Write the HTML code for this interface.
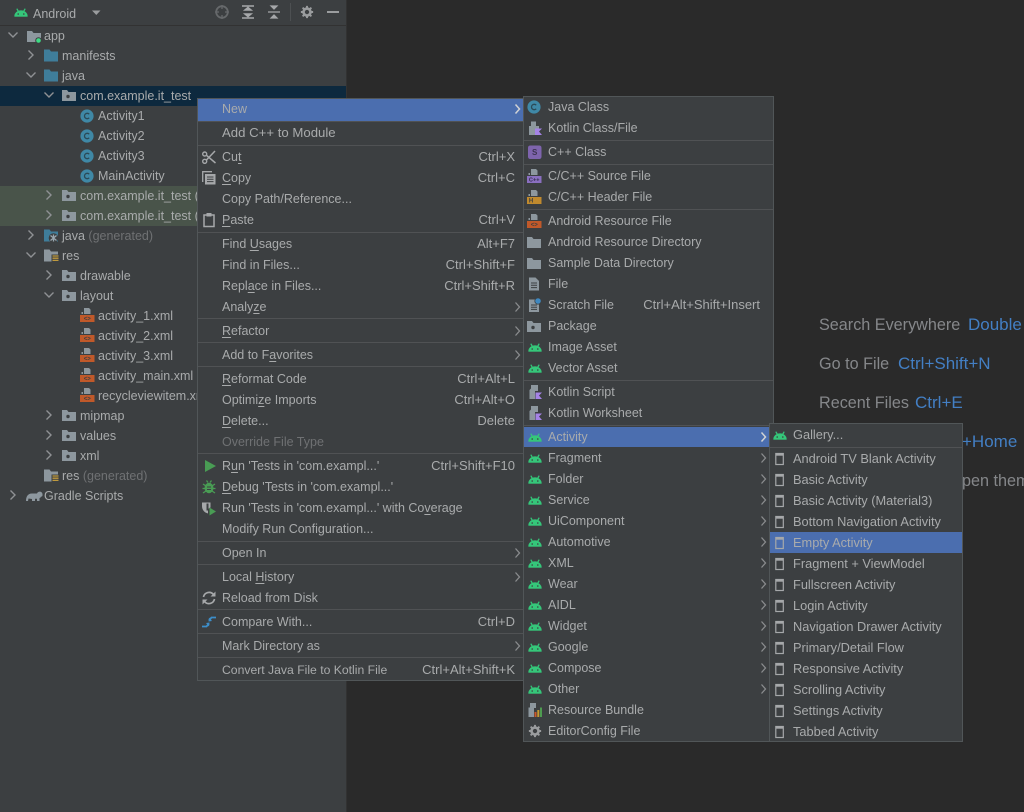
<!DOCTYPE html>
<html><head><meta charset="utf-8"><title>Android Studio</title>
<style>
html,body{margin:0;padding:0;background:#2a2a2a}
#r{position:relative;width:1024px;height:812px;overflow:hidden;background:#2a2a2a;font:12.5px "Liberation Sans",sans-serif;color:#a9abac;filter:blur(.35px)}
#r div{position:absolute}
#r i{position:absolute;font-style:normal;line-height:20px;white-space:nowrap;margin-top:1px}
#r i.m1,#r i.m2,#r i.m3,#r i.k1{margin-top:0}
u{text-underline-offset:2px;text-decoration-thickness:1px}
.m1{left:222px}.m2{left:548px}.m3{left:793px;font-size:12.8px}
.k1{right:509px;font-size:13px}
.g{color:#6f7173}
.h{color:#85878a;font-size:16.2px}
.b{color:#437fc4;font-size:17px}
.s{height:1px;background:#505254}
#r svg{position:absolute;left:0;top:0}
</style></head><body><div id="r">
<div style="left:0;top:0;width:346px;height:812px;background:#3c3f41;border-right:1px solid #323232"></div>
<div style="left:0;top:25px;width:346px;height:1px;background:#323232"></div>
<div style="left:0;top:86px;width:346px;height:20px;background:#0d293e"></div>
<div style="left:0;top:186px;width:346px;height:40px;background:#49544a"></div>
<i style="left:33px;top:3px">Android</i>
<i style="left:44px;top:25px">app</i>
<i style="left:62px;top:45px">manifests</i>
<i style="left:62px;top:65px">java</i>
<i style="left:80px;top:85px">com.example.it_test</i>
<i style="left:98px;top:105px">Activity1</i>
<i style="left:98px;top:125px">Activity2</i>
<i style="left:98px;top:145px">Activity3</i>
<i style="left:98px;top:165px">MainActivity</i>
<i style="left:80px;top:185px">com.example.it_test (test)</i>
<i style="left:80px;top:205px">com.example.it_test (test)</i>
<i style="left:62px;top:225px">java <span class="g">(generated)</span></i>
<i style="left:62px;top:245px">res</i>
<i style="left:80px;top:265px">drawable</i>
<i style="left:80px;top:285px">layout</i>
<i style="left:98px;top:305px">activity_1.xml</i>
<i style="left:98px;top:325px">activity_2.xml</i>
<i style="left:98px;top:345px">activity_3.xml</i>
<i style="left:98px;top:365px">activity_main.xml</i>
<i style="left:98px;top:385px">recycleviewitem.xml</i>
<i style="left:80px;top:405px">mipmap</i>
<i style="left:80px;top:425px">values</i>
<i style="left:80px;top:445px">xml</i>
<i style="left:62px;top:465px">res <span class="g">(generated)</span></i>
<i style="left:44px;top:485px">Gradle Scripts</i>

<i class="h" style="left:819px;top:314px">Search Everywhere</i><i class="b" style="left:968px;top:314px">Double Shift</i>
<i class="h" style="left:819px;top:353px">Go to File</i><i class="b" style="left:898px;top:353px">Ctrl+Shift+N</i>
<i class="h" style="left:819px;top:392px">Recent Files</i><i class="b" style="left:915px;top:392px">Ctrl+E</i>
<i class="b" style="left:962px;top:431px">+Home</i>
<i class="h" style="left:962px;top:470px">pen them</i>

<div style="left:197px;top:98px;width:325px;height:581px;background:#3c3f41;border:1px solid #515658"></div>
<div style="left:198px;top:99px;width:325px;height:22px;background:#4b6eaf"></div>
<div class="s" style="left:198px;top:121px;width:325px"></div>
<div class="s" style="left:198px;top:145px;width:325px"></div>
<div class="s" style="left:198px;top:232px;width:325px"></div>
<div class="s" style="left:198px;top:318px;width:325px"></div>
<div class="s" style="left:198px;top:342px;width:325px"></div>
<div class="s" style="left:198px;top:366px;width:325px"></div>
<div class="s" style="left:198px;top:453px;width:325px"></div>
<div class="s" style="left:198px;top:541px;width:325px"></div>
<div class="s" style="left:198px;top:564px;width:325px"></div>
<div class="s" style="left:198px;top:609px;width:325px"></div>
<div class="s" style="left:198px;top:633px;width:325px"></div>
<div class="s" style="left:198px;top:657px;width:325px"></div>
<i class="m1" style="top:99px">New</i>
<i class="m1" style="top:123px;font-size:13.2px">Add C++ to Module</i>
<i class="m1" style="top:147px">Cu<u>t</u></i><i class="k1" style="top:147px">Ctrl+X</i>
<i class="m1" style="top:168px"><u>C</u>opy</i><i class="k1" style="top:168px">Ctrl+C</i>
<i class="m1" style="top:189px">Copy Path/Reference...</i>
<i class="m1" style="top:210px"><u>P</u>aste</i><i class="k1" style="top:210px">Ctrl+V</i>
<i class="m1" style="top:234px">Find <u>U</u>sages</i><i class="k1" style="top:234px">Alt+F7</i>
<i class="m1" style="top:255px">Find in Files...</i><i class="k1" style="top:255px">Ctrl+Shift+F</i>
<i class="m1" style="top:276px">Repl<u>a</u>ce in Files...</i><i class="k1" style="top:276px">Ctrl+Shift+R</i>
<i class="m1" style="top:297px">Analy<u>z</u>e</i>
<i class="m1" style="top:321px"><u>R</u>efactor</i>
<i class="m1" style="top:345px">Add to F<u>a</u>vorites</i>
<i class="m1" style="top:369px"><u>R</u>eformat Code</i><i class="k1" style="top:369px">Ctrl+Alt+L</i>
<i class="m1" style="top:390px">Optimi<u>z</u>e Imports</i><i class="k1" style="top:390px">Ctrl+Alt+O</i>
<i class="m1" style="top:411px"><u>D</u>elete...</i><i class="k1" style="top:411px">Delete</i>
<i class="m1 g" style="top:432px">Override File Type</i>
<i class="m1" style="top:456px">R<u>u</u>n 'Tests in 'com.exampl...'</i><i class="k1" style="top:456px">Ctrl+Shift+F10</i>
<i class="m1" style="top:477px"><u>D</u>ebug 'Tests in 'com.exampl...'</i>
<i class="m1" style="top:498px">Run 'Tests in 'com.exampl...' with Co<u>v</u>erage</i>
<i class="m1" style="top:519px">Modify Run Configuration...</i>
<i class="m1" style="top:543px">Open In</i>
<i class="m1" style="top:567px">Local <u>H</u>istory</i>
<i class="m1" style="top:588px">Reload from Disk</i>
<i class="m1" style="top:612px">Compare With...</i><i class="k1" style="top:612px">Ctrl+D</i>
<i class="m1" style="top:636px">Mark Directory as</i>
<i class="m1" style="top:660px;font-size:12.2px">Convert Java File to Kotlin File</i><i class="k1" style="top:660px">Ctrl+Alt+Shift+K</i>

<div style="left:523px;top:96px;width:249px;height:644px;background:#3c3f41;border:1px solid #515658"></div>
<div class="s" style="left:524px;top:140px;width:249px"></div>
<div class="s" style="left:524px;top:164px;width:249px"></div>
<div class="s" style="left:524px;top:209px;width:249px"></div>
<div class="s" style="left:524px;top:380px;width:249px"></div>
<div class="s" style="left:524px;top:425px;width:249px"></div>
<div style="left:524px;top:427px;width:245px;height:20px;background:#4b6eaf"></div>
<i class="m2" style="top:97px">Java Class</i>
<i class="m2" style="top:118px">Kotlin Class/File</i>
<i class="m2" style="top:142px">C++ Class</i>
<i class="m2" style="top:166px">C/C++ Source File</i>
<i class="m2" style="top:187px">C/C++ Header File</i>
<i class="m2" style="top:211px">Android Resource File</i>
<i class="m2" style="top:232px">Android Resource Directory</i>
<i class="m2" style="top:253px">Sample Data Directory</i>
<i class="m2" style="top:274px">File</i>
<i class="m2" style="top:295px">Scratch File</i><i class="k1" style="right:264px;top:295px">Ctrl+Alt+Shift+Insert</i>
<i class="m2" style="top:316px">Package</i>
<i class="m2" style="top:337px">Image Asset</i>
<i class="m2" style="top:358px">Vector Asset</i>
<i class="m2" style="top:382px">Kotlin Script</i>
<i class="m2" style="top:403px">Kotlin Worksheet</i>
<i class="m2" style="top:427px">Activity</i>
<i class="m2" style="top:448px">Fragment</i>
<i class="m2" style="top:469px">Folder</i>
<i class="m2" style="top:490px">Service</i>
<i class="m2" style="top:511px">UiComponent</i>
<i class="m2" style="top:532px">Automotive</i>
<i class="m2" style="top:553px">XML</i>
<i class="m2" style="top:574px">Wear</i>
<i class="m2" style="top:595px">AIDL</i>
<i class="m2" style="top:616px">Widget</i>
<i class="m2" style="top:637px">Google</i>
<i class="m2" style="top:658px">Compose</i>
<i class="m2" style="top:679px">Other</i>
<i class="m2" style="top:700px">Resource Bundle</i>
<i class="m2" style="top:721px">EditorConfig File</i>

<div style="left:769px;top:423px;width:192px;height:317px;background:#3c3f41;border:1px solid #515658"></div>
<div class="s" style="left:770px;top:447px;width:192px"></div>
<div style="left:770px;top:532px;width:192px;height:21px;background:#4b6eaf"></div>
<i class="m3" style="top:425px">Gallery...</i>
<i class="m3" style="top:449px">Android TV Blank Activity</i>
<i class="m3" style="top:470px">Basic Activity</i>
<i class="m3" style="top:491px">Basic Activity (Material3)</i>
<i class="m3" style="top:512px">Bottom Navigation Activity</i>
<i class="m3" style="top:533px">Empty Activity</i>
<i class="m3" style="top:554px">Fragment + ViewModel</i>
<i class="m3" style="top:575px">Fullscreen Activity</i>
<i class="m3" style="top:596px">Login Activity</i>
<i class="m3" style="top:617px">Navigation Drawer Activity</i>
<i class="m3" style="top:638px">Primary/Detail Flow</i>
<i class="m3" style="top:659px">Responsive Activity</i>
<i class="m3" style="top:680px">Scrolling Activity</i>
<i class="m3" style="top:701px">Settings Activity</i>
<i class="m3" style="top:722px">Tabbed Activity</i>

<svg width="1024" height="812" viewBox="0 0 1024 812" font-family="Liberation Sans, sans-serif">
<defs>
<g id="droid"><path d="M1.500 12.500c0-2.600 1.400-4.300 3.200-5.200L3.500 5l.8-.4 1.300 2.300c1.500-.5 3.300-.5 4.800 0l1.300-2.300.8.400-1.200 2.300c1.800.9 3.200 2.600 3.200 5.200z" fill="#35c77a" stroke="#35c77a" stroke-width=".4"/><circle cx="5.200" cy="10" r=".8" fill="#3c3f41"/><circle cx="10.800" cy="10" r=".8" fill="#3c3f41"/></g>
<path id="cr" d="M5.500 3.500l4.500 4.500-4.500 4.500" fill="none" stroke="#8f9194" stroke-width="1.400"/>
<path id="cd" d="M3.500 5.500l4.500 4.500 4.500-4.500" fill="none" stroke="#8f9194" stroke-width="1.400"/>
<path id="ar" d="M5.500 3.500l4 4.500-4 4.500" fill="none" stroke="#8a8c8e" stroke-width="1.300"/>
<path id="arw" d="M5.500 3.500l4 4.500-4 4.500" fill="none" stroke="#d0d2d4" stroke-width="1.500"/>
<path id="fb" d="M1 2.500h5.500l1.500 2h7v10H1z" fill="#3f7d9a"/>
<path id="fg" d="M1 3h5l1.500 2H15v9H1z" fill="#8d979e"/>
<g id="pk"><path d="M1 3h5l1.500 2H15v9H1z" fill="#8d979e"/><circle cx="7" cy="9.500" r="1.700" fill="#3c3f41"/></g>
<g id="app"><path d="M1 3h5l1.500 2H15v9H1z" fill="#8d979e"/><circle cx="12.500" cy="12.500" r="2.800" fill="#3ddc84" stroke="#3c3f41"/></g>
<g id="jgen"><path d="M1 2.500h5.500l1.500 2h7v10H1z" fill="#3f7d9a"/><circle cx="10.500" cy="11" r="4.800" fill="#3c3f41"/><path d="M7.500 8.500l6 5M13.500 8.500l-6 5M10.500 7.500v7" stroke="#9aa7b0" stroke-width="1.300"/></g>
<g id="res"><path d="M1 2.500h5.500l1.500 2h7v10H1z" fill="#8d979e"/><rect x="8.500" y="7.500" width="7" height="8" fill="#3c3f41"/><path d="M9.500 9h6M9.500 11.200h6M9.500 13.400h6" stroke="#c09a3e" stroke-width="1.300"/></g>
<g id="cls"><circle cx="8" cy="8" r="6.600" fill="#3f88a6"/><path d="M10.200 6.200a2.700 2.700 0 1 0 0 3.600" fill="none" stroke="#2b4a57" stroke-width="1.300"/></g>
<g id="xml"><path d="M5 1h5l1.500 1.500V7H5zM2.500 5H4v2H2.500z" fill="#8d979e"/><rect x="1" y="8" width="14.500" height="7" fill="#c0592a"/><text x="8.200" y="13.600" font-size="6" text-anchor="middle" fill="#3c3f41" font-weight="bold">&lt;&gt;</text></g>
<g id="cpp"><path d="M5 1h5l1.500 1.500V7H5zM2.500 5H4v2H2.500z" fill="#8d979e"/><rect x="1" y="8" width="14.500" height="7" fill="#8a6fc0"/><text x="8.200" y="13.600" font-size="5.600" text-anchor="middle" fill="#33304a" font-weight="bold">C++</text></g>
<g id="hdr"><path d="M5 1h5l1.500 1.500V7H5zM2.500 5H4v2H2.500z" fill="#8d979e"/><rect x="1" y="8" width="14.500" height="7" fill="#c08a2e"/><text x="5" y="13.600" font-size="6" text-anchor="middle" fill="#3c3f41" font-weight="bold">H</text></g>
<g id="kt"><path d="M4 1.500h5V6h3v3H8v6H2V6h2z" fill="#8d979e"/><path d="M8 8.500h7l-3 3 3 3.500H8z" fill="#a583e6"/></g>
<g id="ks"><path d="M4 1h7v6H8v8H2.500V6L4 4.500z" fill="#8d979e"/><path d="M8.500 8.500h6.500l-3 3 3 3.500h-6.500z" fill="#a583e6"/></g>
<g id="scl"><rect x="1" y="1.500" width="13.500" height="13.500" rx="2.200" fill="#7e64ad"/><text x="7.700" y="11.200" font-size="8" text-anchor="middle" fill="#3c3350" font-weight="bold">S</text></g>
<g id="doc"><path d="M3 1.500h6.500l3.500 3.500v9.500H3z" fill="#8d979e"/><path d="M5 7h6M5 9.300h6M5 11.600h6" stroke="#3c3f41" stroke-width="1"/></g>
<g id="scr"><path d="M3 2.500h6.500l3.500 3.500v9H3z" fill="#8d979e"/><path d="M5 8h6M5 10.200h6M5 12.400h6" stroke="#3c3f41" stroke-width="1"/><circle cx="12" cy="4" r="3.200" fill="#3f88c0" stroke="#3c3f41" stroke-width=".8"/></g>
<g id="act"><rect x="3.800" y="2.500" width="7.500" height="11" fill="none" stroke="#a6a8aa" stroke-width="1.200"/><rect x="3.800" y="2.500" width="7.500" height="2.200" fill="#a6a8aa"/></g>
<g id="gear" transform="scale(.875)"><circle cx="8" cy="8" r="4" fill="none" stroke="#9a9c9e" stroke-width="3"/><path d="M8 1v3M8 12v3M1 8h3M12 8h3M3 3l2.200 2.200M10.800 10.800L13 13M13 3l-2.200 2.200M5.200 10.800L3 13" stroke="#9a9c9e" stroke-width="2.200"/></g>
<g id="bun"><path d="M3 1h6v5H7v9H1.500V5.500H3z" fill="#8d979e"/><rect x="7.500" y="10" width="2" height="5" fill="#c9572a"/><rect x="10.300" y="8" width="2" height="7" fill="#c49a2e"/><rect x="13" y="5.500" width="2" height="9.500" fill="#4e9b50"/></g>
<g id="cut"><circle cx="3.700" cy="12.300" r="2" fill="none" stroke="#a6a8aa" stroke-width="1.400"/><circle cx="3.700" cy="5" r="2" fill="none" stroke="#a6a8aa" stroke-width="1.400"/><path d="M5.300 6.200L14.500 14M5.300 11.100L14 2" stroke="#a6a8aa" stroke-width="1.500"/></g>
<g id="cpy"><path d="M1.700 12V1.700H11" fill="none" stroke="#a6a8aa" stroke-width="1.300"/><rect x="4" y="4" width="10.500" height="10.500" fill="#a6a8aa"/><path d="M6 7h6.500M6 9.300h6.500M6 11.600h6.500" stroke="#3c3f41"/></g>
<g id="pst"><rect x="3" y="3" width="10" height="11.500" fill="none" stroke="#a6a8aa" stroke-width="1.500"/><rect x="5.500" y="1" width="5" height="3.500" fill="#a6a8aa"/></g>
<path id="run" d="M3 2l11 6-11 6z" fill="#499c54"/>
<g id="dbg"><ellipse cx="8" cy="9" rx="4.500" ry="5.200" fill="#499c54"/><path d="M2 5l3 2M14 5l-3 2M1.500 9.500h3M14.500 9.500h-3M2 14l3-2M14 14l-3-2M5.500 1.500l1.500 2M10.500 1.500l-1.500 2" stroke="#499c54" stroke-width="1.300"/><path d="M6 8h4M6 10.500h4" stroke="#3c3f41" stroke-width="1"/></g>
<g id="cov"><path d="M1 2.500h8.500v5L7 9v4.500C3 12.500 1 9.500 1 6z" fill="#a6a8aa"/><path d="M5.500 3.500h2v7h-2z" fill="#3c3f41"/><path d="M8.500 7.500l6.500 4-6.500 4z" fill="#499c54"/></g>
<g id="rel"><path d="M2.500 7a5.700 5.700 0 0 1 10-2.500M13.500 9a5.700 5.700 0 0 1-10 2.500" fill="none" stroke="#a6a8aa" stroke-width="1.700"/><path d="M14.500 1.500v5h-5zM1.500 14.500v-5h5z" fill="#a6a8aa"/></g>
<g id="cmp"><path d="M1 12.500h4.500L8 9.500M15 3.500h-4.500L8 6.500" fill="none" stroke="#3d8ec9" stroke-width="1.800"/><path d="M5 9l3.500-.5-.5 4zM11 7l-3.500.5.500-4z" fill="#3d8ec9"/></g>
<path id="ele" d="M1 14c0-4 1.500-7.500 6-7.500h5c1-2.500 5-2.500 5.500.5.300 2-.5 3-1.500 2.500-.3 1.200-1 1.500-1.500 1.500V14h-2.500v-2.200h-2V14H7v-2L3.500 11.500 3 14z" fill="#8d979e"/>
</defs>

<use href="#droid" x="13" y="4"/>
<path d="M92 10.500h8.500l-4.200 4.500z" fill="#9a9c9e"/>
<circle cx="222" cy="12" r="5.800" fill="none" stroke="#66696b" stroke-width="1.800"/><path d="M222 5v4M222 15v4M215 12h4M225 12h4" stroke="#66696b" stroke-width="1.300"/>
<path d="M242 6h12M242 18h12M245 10l3-2.500 3 2.500zM245 14l3 2.500 3-2.500z" stroke="#a6a8aa" stroke-width="1.500" fill="#a6a8aa"/>
<path d="M268 12h12M271 6l3 3 3-3zM271 18l3-3 3 3z" stroke="#a6a8aa" stroke-width="1.200" fill="#a6a8aa"/>
<path d="M290.500 3v18" stroke="#4d5052"/>
<use href="#gear" x="300" y="5"/>
<path d="M327 12h12" stroke="#a6a8aa" stroke-width="1.800"/>

<use href="#cd" x="5" y="27"/><use href="#app" x="26" y="28"/>
<use href="#cr" x="23" y="47"/><use href="#fb" x="43" y="47"/>
<use href="#cd" x="23" y="67"/><use href="#fb" x="43" y="67"/>
<use href="#cd" x="41" y="87"/><use href="#pk" x="61" y="87"/>
<use href="#cls" x="79" y="108"/><use href="#cls" x="79" y="128"/><use href="#cls" x="79" y="148"/><use href="#cls" x="79" y="168"/>
<use href="#cr" x="41" y="187"/><use href="#pk" x="61" y="187"/>
<use href="#cr" x="41" y="207"/><use href="#pk" x="61" y="207"/>
<use href="#cr" x="23" y="227"/><use href="#jgen" x="43" y="227"/>
<use href="#cd" x="23" y="247"/><use href="#res" x="43" y="247"/>
<use href="#cr" x="41" y="267"/><use href="#pk" x="61" y="267"/>
<use href="#cd" x="41" y="287"/><use href="#pk" x="61" y="287"/>
<use href="#xml" x="79" y="307"/><use href="#xml" x="79" y="327"/><use href="#xml" x="79" y="347"/><use href="#xml" x="79" y="367"/><use href="#xml" x="79" y="387"/>
<use href="#cr" x="41" y="407"/><use href="#pk" x="61" y="407"/>
<use href="#cr" x="41" y="427"/><use href="#pk" x="61" y="427"/>
<use href="#cr" x="41" y="447"/><use href="#pk" x="61" y="447"/>
<use href="#res" x="43" y="467"/>
<use href="#cr" x="5" y="487"/><use href="#ele" x="25" y="487"/>

<use href="#cut" x="201" y="149"/><use href="#cpy" x="201" y="170"/><use href="#pst" x="201" y="212"/>
<use href="#run" x="202" y="458"/><use href="#dbg" x="201" y="479"/><use href="#cov" x="201" y="500"/>
<use href="#rel" x="201" y="590"/><use href="#cmp" x="201" y="614"/>
<use href="#arw" x="510" y="101"/><use href="#ar" x="510" y="299"/><use href="#ar" x="510" y="323"/><use href="#ar" x="510" y="347"/><use href="#ar" x="510" y="545"/><use href="#ar" x="510" y="569"/><use href="#ar" x="510" y="638"/>

<use href="#cls" x="526" y="99"/><use href="#kt" x="527" y="120"/><use href="#scl" x="527" y="144"/>
<use href="#cpp" x="526" y="168"/><use href="#hdr" x="526" y="189"/><use href="#xml" x="526" y="213"/>
<use href="#fg" x="526" y="234"/><use href="#fg" x="526" y="255"/><use href="#doc" x="526" y="276"/><use href="#scr" x="526" y="297"/><use href="#pk" x="526" y="318"/>
<use href="#droid" x="527" y="339"/><use href="#droid" x="527" y="360"/><use href="#ks" x="527" y="384"/><use href="#ks" x="527" y="405"/>
<use href="#droid" x="527" y="429"/><use href="#droid" x="527" y="450"/><use href="#droid" x="527" y="471"/><use href="#droid" x="527" y="492"/><use href="#droid" x="527" y="513"/><use href="#droid" x="527" y="534"/><use href="#droid" x="527" y="555"/><use href="#droid" x="527" y="576"/><use href="#droid" x="527" y="597"/><use href="#droid" x="527" y="618"/><use href="#droid" x="527" y="639"/><use href="#droid" x="527" y="660"/><use href="#droid" x="527" y="681"/>
<use href="#bun" x="527" y="702"/><use href="#gear" x="528" y="724"/>
<use href="#arw" x="756" y="429"/><use href="#ar" x="756" y="450"/><use href="#ar" x="756" y="471"/><use href="#ar" x="756" y="492"/><use href="#ar" x="756" y="513"/><use href="#ar" x="756" y="534"/><use href="#ar" x="756" y="555"/><use href="#ar" x="756" y="576"/><use href="#ar" x="756" y="597"/><use href="#ar" x="756" y="618"/><use href="#ar" x="756" y="639"/><use href="#ar" x="756" y="660"/><use href="#ar" x="756" y="681"/>

<use href="#droid" x="772" y="427"/>
<use href="#act" x="772" y="451"/><use href="#act" x="772" y="472"/><use href="#act" x="772" y="493"/><use href="#act" x="772" y="514"/><use href="#act" x="772" y="535"/><use href="#act" x="772" y="556"/><use href="#act" x="772" y="577"/><use href="#act" x="772" y="598"/><use href="#act" x="772" y="619"/><use href="#act" x="772" y="640"/><use href="#act" x="772" y="661"/><use href="#act" x="772" y="682"/><use href="#act" x="772" y="703"/><use href="#act" x="772" y="724"/>
</svg>
</div></body></html>
